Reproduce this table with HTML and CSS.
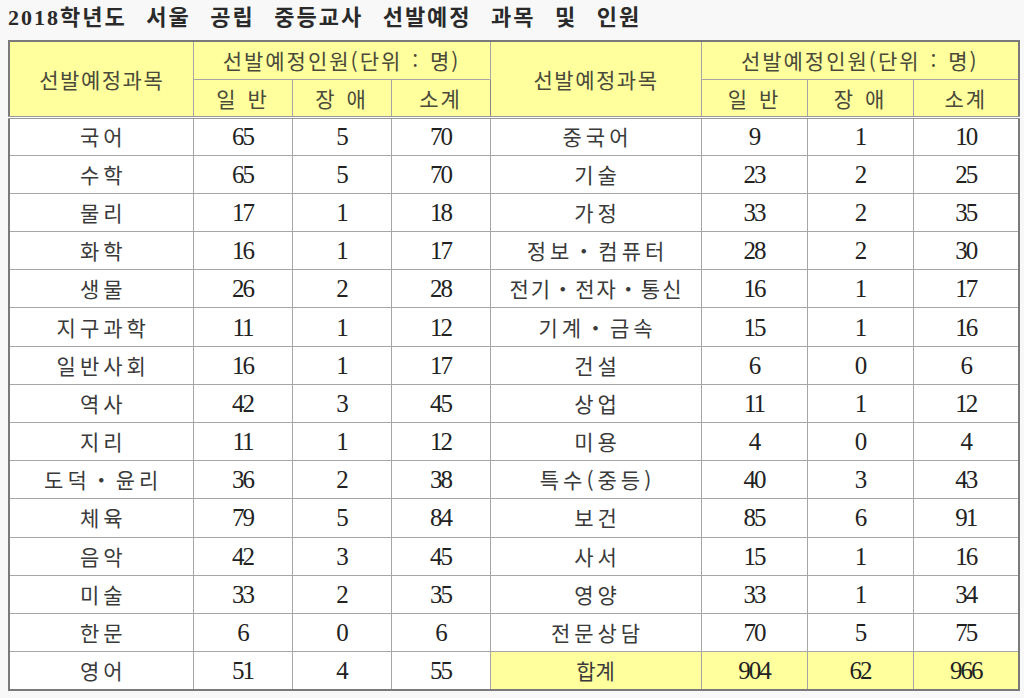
FILE: index.html
```html
<!DOCTYPE html>
<html lang="ko">
<head>
<meta charset="utf-8">
<title>2018학년도 서울 공립 중등교사 선발예정 과목 및 인원</title>
<link rel="stylesheet" href="styles.css">
</head>
<body>
<h1 class="title">2018학년도 서울 공립 중등교사 선발예정 과목 및 인원</h1>
<table class="quota">
  <colgroup>
    <col class="c-subj-l"><col class="c-num-l"><col class="c-num-l"><col class="c-num-l">
    <col class="c-subj-r"><col class="c-num-r"><col class="c-num-r"><col class="c-num-r">
  </colgroup>
  <thead>
    <tr class="h1">
      <th rowspan="2" class="subj">선발예정과목</th>
      <th colspan="3">선발예정인원(단위 : 명)</th>
      <th rowspan="2" class="subj mid">선발예정과목</th>
      <th colspan="3">선발예정인원(단위 : 명)</th>
    </tr>
    <tr class="h2">
      <th>일 반</th><th>장 애</th><th>소계</th>
      <th>일 반</th><th>장 애</th><th>소계</th>
    </tr>
  </thead>
  <tbody>
    <tr><td class="k">국어</td><td>65</td><td>5</td><td>70</td><td class="k mid">중국어</td><td>9</td><td>1</td><td>10</td></tr>
    <tr><td class="k">수학</td><td>65</td><td>5</td><td>70</td><td class="k mid">기술</td><td>23</td><td>2</td><td>25</td></tr>
    <tr><td class="k">물리</td><td>17</td><td>1</td><td>18</td><td class="k mid">가정</td><td>33</td><td>2</td><td>35</td></tr>
    <tr><td class="k">화학</td><td>16</td><td>1</td><td>17</td><td class="k mid">정보・컴퓨터</td><td>28</td><td>2</td><td>30</td></tr>
    <tr><td class="k">생물</td><td>26</td><td>2</td><td>28</td><td class="k mid tight">전기・전자・통신</td><td>16</td><td>1</td><td>17</td></tr>
    <tr><td class="k">지구과학</td><td>11</td><td>1</td><td>12</td><td class="k mid">기계・금속</td><td>15</td><td>1</td><td>16</td></tr>
    <tr><td class="k">일반사회</td><td>16</td><td>1</td><td>17</td><td class="k mid">건설</td><td>6</td><td>0</td><td>6</td></tr>
    <tr><td class="k">역사</td><td>42</td><td>3</td><td>45</td><td class="k mid">상업</td><td>11</td><td>1</td><td>12</td></tr>
    <tr><td class="k">지리</td><td>11</td><td>1</td><td>12</td><td class="k mid">미용</td><td>4</td><td>0</td><td>4</td></tr>
    <tr><td class="k">도덕・윤리</td><td>36</td><td>2</td><td>38</td><td class="k mid">특수(중등)</td><td>40</td><td>3</td><td>43</td></tr>
    <tr><td class="k">체육</td><td>79</td><td>5</td><td>84</td><td class="k mid">보건</td><td>85</td><td>6</td><td>91</td></tr>
    <tr><td class="k">음악</td><td>42</td><td>3</td><td>45</td><td class="k mid">사서</td><td>15</td><td>1</td><td>16</td></tr>
    <tr><td class="k">미술</td><td>33</td><td>2</td><td>35</td><td class="k mid">영양</td><td>33</td><td>1</td><td>34</td></tr>
    <tr><td class="k">한문</td><td>6</td><td>0</td><td>6</td><td class="k mid">전문상담</td><td>70</td><td>5</td><td>75</td></tr>
    <tr><td class="k">영어</td><td>51</td><td>4</td><td>55</td><td class="k mid total">합계</td><td class="total">904</td><td class="total">62</td><td class="total">966</td></tr>
  </tbody>
</table>
</body>
</html>
```

FILE: styles.css
```css
html, body {
  margin: 0;
  padding: 0;
  background: #f8f8f8;
}
body {
  padding: 0 6px 0 8px;
  font-family: "Noto Sans CJK KR", "Liberation Serif", serif;
}
.title {
  margin: 0;
  height: 40px;
  padding-top: 3px;
  box-sizing: border-box;
  font-family: "Liberation Serif", "Noto Sans CJK KR", serif;
  font-size: 22px;
  font-weight: bold;
  line-height: 30px;
  color: #2a2a2a;
  word-spacing: 12px;
  letter-spacing: 2px;
}
.quota {
  border-collapse: collapse;
  table-layout: fixed;
  width: 1010px;
  border: 2px solid #7a7a7a;
  background: #fff;
}
.c-subj-l { width: 184px; }
.c-num-l { width: 99px; }
.c-subj-r { width: 211px; }
.c-num-r { width: 106px; }
.quota th, .quota td {
  border: 1px solid #a6a6a6;
  padding: 0;
  text-align: center;
  vertical-align: middle;
  white-space: nowrap;
}
.quota th {
  background: #ffff9e;
  font-family: "Noto Sans CJK KR", sans-serif;
  font-weight: normal;
  font-size: 21px;
  color: #4a4a3a;
  letter-spacing: 2px;
  word-spacing: 2px;
}
.quota thead tr { height: 38px; }
.quota thead tr.h2 th { border-bottom: 3px double #999; letter-spacing: 2px; }
.quota th.subj { border-bottom: 3px double #999; letter-spacing: 1.5px; padding-left: 1px; }
.quota tbody tr { height: 38.2px; }
.quota td {
  font-family: "Liberation Serif", serif;
  font-size: 25px;
  letter-spacing: -2px;
  color: #222;
  line-height: 1;
}
.quota td.k {
  font-family: "Noto Sans CJK KR", sans-serif;
  font-size: 21px;
  letter-spacing: 4px;
  padding-left: 4px;
  color: #3a3a3a;
}
.quota td.k.tight { letter-spacing: 2px; padding-left: 2px; }
.quota .mid { border-left: 1px solid #8a8a8a; }
.quota td.total { background: #ffff9e; }
.quota td.k.total { letter-spacing: 0; padding-left: 0; }
```
